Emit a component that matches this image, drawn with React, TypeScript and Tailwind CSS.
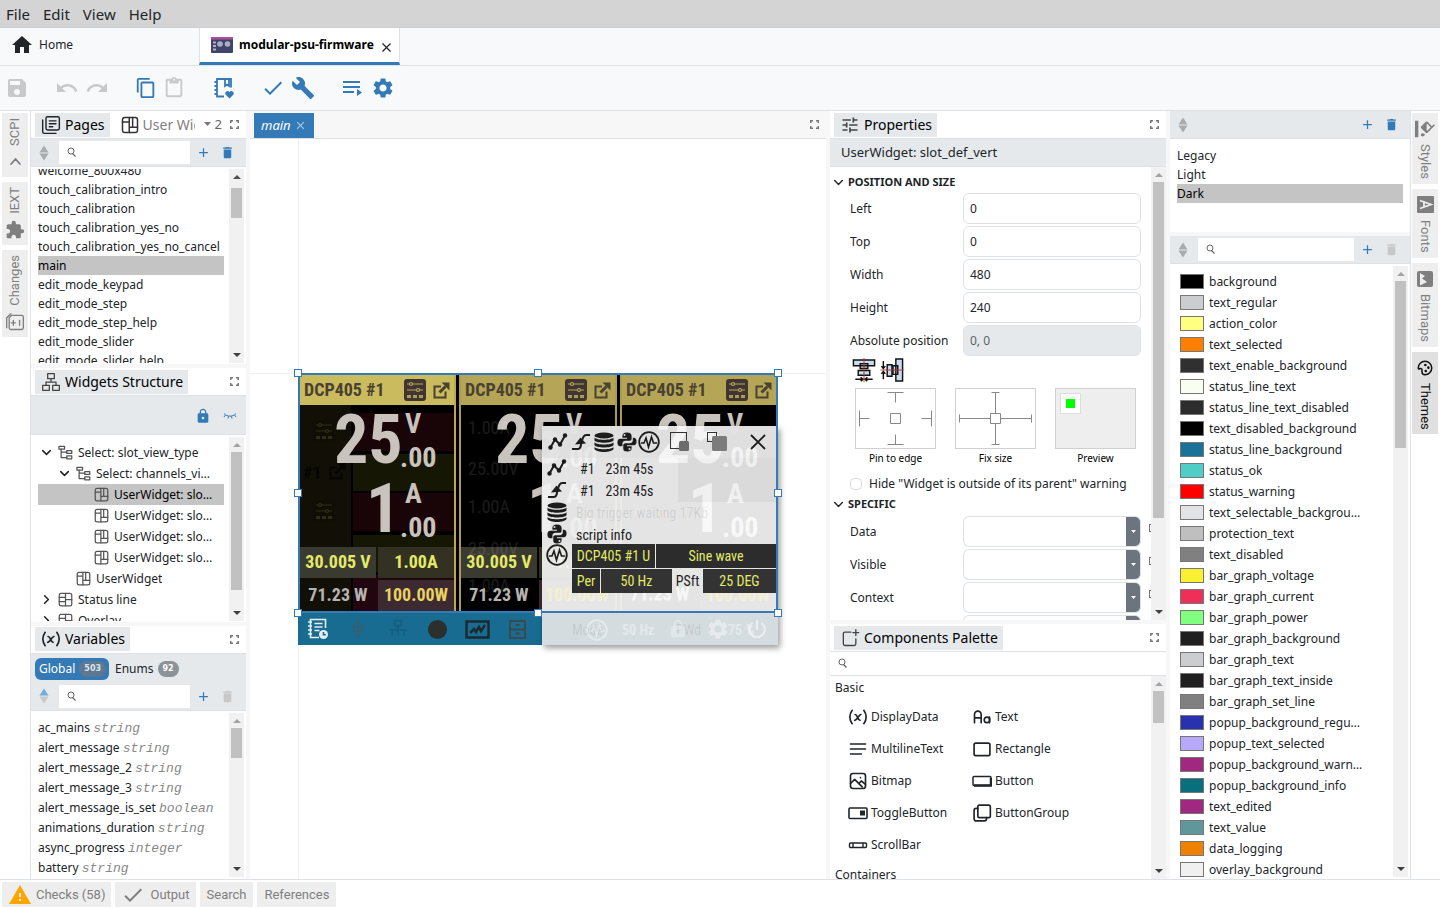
import type { ReactNode } from "react";
import clsx from "clsx";
import {
  MdAdd,
  MdBuild,
  MdCheck,
  MdClose,
  MdContentCopy,
  MdContentPaste,
  MdDelete,
  MdExtension,
  MdFormatColorFill,
  MdHome,
  MdLock,
  MdRedo,
  MdSave,
  MdSettings,
  MdTune,
  MdUndo,
  MdUsb,
  MdWarning,
} from "react-icons/md";

const pages = [
  "welcome_800x480",
  "touch_calibration_intro",
  "touch_calibration",
  "touch_calibration_yes_no",
  "touch_calibration_yes_no_cancel",
  "main",
  "edit_mode_keypad",
  "edit_mode_step",
  "edit_mode_step_help",
  "edit_mode_slider",
  "edit_mode_slider_help",
];

const variables = [
  ["ac_mains", "string"],
  ["alert_message", "string"],
  ["alert_message_2", "string"],
  ["alert_message_3", "string"],
  ["alert_message_is_set", "boolean"],
  ["animations_duration", "string"],
  ["async_progress", "integer"],
  ["battery", "string"],
];

const themeColors = [
  ["background", "#000000"],
  ["text_regular", "#cccdcf"],
  ["action_color", "#ffff80"],
  ["text_selected", "#ff8000"],
  ["text_enable_background", "#303030"],
  ["status_line_text", "#f8fff0"],
  ["status_line_text_disabled", "#2c2c2c"],
  ["text_disabled_background", "#000000"],
  ["status_line_background", "#1a7299"],
  ["status_ok", "#50cdc6"],
  ["status_warning", "#ff0000"],
  ["text_selectable_background", "#e2e3e4"],
  ["protection_text", "#bfbfbf"],
  ["text_disabled", "#808080"],
  ["bar_graph_voltage", "#fdf030"],
  ["bar_graph_current", "#ee3058"],
  ["bar_graph_power", "#80ff80"],
  ["bar_graph_background", "#202020"],
  ["bar_graph_text", "#cccdcf"],
  ["bar_graph_text_inside", "#202020"],
  ["bar_graph_set_line", "#808080"],
  ["popup_background_regular", "#2832b0"],
  ["popup_text_selected", "#b8a8fa"],
  ["popup_background_warning", "#a02880"],
  ["popup_background_info", "#08707c"],
  ["text_edited", "#a02880"],
  ["text_value", "#60979b"],
  ["data_logging", "#f08000"],
  ["overlay_background", "#f0f0f0"],
];

type IconProps = { className?: string; size?: number; children?: ReactNode };

function Line({ className, size = 18, children }: IconProps) {
  return (
    <svg
      width={size}
      height={size}
      viewBox="0 0 24 24"
      fill="none"
      stroke="currentColor"
      strokeWidth="2"
      strokeLinecap="round"
      strokeLinejoin="round"
      className={clsx("shrink-0", className)}
      aria-hidden="true"
    >
      {children}
    </svg>
  );
}

function PagesIcon() {
  return (
    <Line size={20}>
      <rect x="6" y="2" width="16" height="16" rx="2" strokeWidth="1.700" />
      <path d="M2 6v14a2 2 0 0 0 2 2h14M10 7h8M10 10.500h8M10 14h4" strokeWidth="1.700" />
    </Line>
  );
}

function WidgetIcon({ size = 18, className }: IconProps) {
  return (
    <Line size={size} className={className}>
      <rect x="2" y="2" width="20" height="20" rx="3" />
      <path d="M2 8h9M11 2v20M11 15h11M15.500 2v13" />
    </Line>
  );
}

function GridIcon({ size = 15 }: IconProps) {
  return (
    <Line size={size} className="text-[#555]">
      <rect x="2" y="2" width="20" height="20" rx="3" />
      <path d="M2 8.500h10M2 15.500h10M12 2v20M12 12h10" />
    </Line>
  );
}

function SelectIcon() {
  return (
    <Line size={15} className="text-[#555]">
      <rect x="1.500" y="2" width="9" height="4.500" />
      <rect x="14" y="9" width="8" height="4.500" />
      <rect x="14" y="17.500" width="8" height="4.500" />
      <path d="M5 6.500V20h9M5 11.500h9" />
    </Line>
  );
}

function SitemapIcon() {
  return (
    <Line size={20} className="text-[#444]">
      <rect x="8" y="2" width="8" height="6" strokeWidth="1.500" />
      <rect x="2" y="16" width="8" height="6" strokeWidth="1.500" />
      <rect x="14" y="16" width="8" height="6" strokeWidth="1.500" />
      <path d="M12 8v4M6 16v-4h12v4" strokeWidth="1.500" />
    </Line>
  );
}

function VariableIcon({ size = 20 }: IconProps) {
  return (
    <Line size={size}>
      <path d="M5 4C1.500 9 1.500 15 5 20M19 4c3.500 5 3.500 11 0 16M8.500 9c3 0 3 7 6 7M8 16c2 0 5.500-7 7.500-7" />
    </Line>
  );
}

function SearchIcon({ className }: IconProps) {
  return (
    <svg width="10" height="10" viewBox="0 0 10 10" fill="none" stroke="#666" className={className} aria-hidden="true">
      <circle cx="4" cy="4" r="3" />
      <path d="M5.500 6.500L8.500 9.500" strokeWidth="1.300" />
    </svg>
  );
}

function SortIcon({ active }: { active?: boolean }) {
  return (
    <svg width="10" height="16" viewBox="0 0 10 16" className="shrink-0" aria-hidden="true">
      <path d="M.5 7.500L5 .5l4.500 7z" fill={active ? "#71ade0" : "#a9abad"} />
      <path d="M.5 8.500h9L5 15.500z" fill={active ? "#c6c8ca" : "#a9abad"} />
    </svg>
  );
}

function Maximize() {
  return (
    <button type="button" aria-label="Maximize" className="ml-auto mr-[7px] text-[#777]">
      <svg width="9" height="9" viewBox="0 0 9 9" fill="none" stroke="currentColor" strokeWidth="1.500">
        <path d="M.75 3V.75H3M6 .75h2.250V3M8.250 6v2.250H6M3 8.250H.75V6" />
      </svg>
    </button>
  );
}

function Scrollbar({ before, thumb, after, topIdle }: { before: string; thumb: string; after: string; topIdle?: boolean }) {
  return (
    <div className="flex w-[15px] shrink-0 flex-col items-center bg-[#f1f1f1] py-[6px]" aria-hidden="true">
      <svg width="8" height="4" viewBox="0 0 8 4" className="mb-[5px] shrink-0">
        <path d="M0 4l4-4 4 4z" fill={topIdle ? "#a3a3a3" : "#505050"} />
      </svg>
      <div className={before} />
      <div className={clsx("w-[11px] bg-[#c1c1c1]", thumb)} />
      <div className={after} />
      <svg width="8" height="4" viewBox="0 0 8 4" className="mt-[5px] shrink-0">
        <path d="M0 0l4 4 4-4z" fill="#404040" />
      </svg>
    </div>
  );
}

function PanelHeader({ icon, title, children }: { icon: ReactNode; title: string; children?: ReactNode }) {
  return (
    <header className="flex h-7 shrink-0 items-center border-b border-[#dee2e6] bg-white">
      <h2 className="ml-1 flex h-6 items-center gap-1 bg-[#e5e9ec] pl-[6px] pr-[5px] text-sm font-normal text-[#212529]">
        {icon}
        <span className="whitespace-nowrap text-black">{title}</span>
      </h2>
      {children}
      <Maximize />
    </header>
  );
}

function SearchBox({ label }: { label: string }) {
  return (
    <div className="relative min-w-0 flex-1">
      <SearchIcon className="absolute left-[8px] top-[6px]" />
      <input type="text" aria-label={label} className="block h-[23px] w-full bg-white pl-6 outline-none" />
    </div>
  );
}

function ListToolbar({ label, sorted, canDelete }: { label: string; sorted?: boolean; canDelete?: boolean }) {
  return (
    <div className="flex h-7 shrink-0 items-center border-b border-[#dee2e6] bg-[#e5e9ec] pl-2">
      <button type="button" aria-label="Sort" className="mr-[10px]">
        <SortIcon active={sorted} />
      </button>
      <SearchBox label={label} />
      <button type="button" aria-label="Add" className="ml-[6px] text-[#337ab7]">
        <MdAdd size={15} />
      </button>
      <button type="button" aria-label="Delete" className={clsx("ml-[9px] mr-[11px]", canDelete ? "text-[#337ab7]" : "text-[#c8c8c8]")}>
        <MdDelete size={15} />
      </button>
    </div>
  );
}

function RailTab({ label, icon, side, active }: { label: string; icon: ReactNode; side: "left" | "right"; active?: boolean }) {
  return (
    <button
      type="button"
      className={clsx(
        "flex w-[26px] flex-col items-center font-[Roboto,sans-serif] text-[13px] leading-4",
        side === "left" ? "gap-[6px] py-[5px]" : "gap-[6px] pb-[5px] pt-[7px]",
        active ? "bg-[#e0e0e0] text-[#111]" : "bg-[#eeeeee] text-[#7f7f7f]",
      )}
    >
      {side === "left" ? (
        <>
          <span className="rotate-180 [writing-mode:vertical-rl]">{label}</span>
          <span className="flex h-5 items-center">{icon}</span>
        </>
      ) : (
        <>
          <span className="flex h-[18px] items-center">{icon}</span>
          <span className="[writing-mode:vertical-rl]">{label}</span>
        </>
      )}
    </button>
  );
}

function PagesPanel() {
  return (
    <section className="flex min-h-0 flex-1 flex-col bg-white">
      <PanelHeader icon={<PagesIcon />} title="Pages">
        <button type="button" className="ml-[11px] flex w-[74px] items-center gap-1 overflow-hidden whitespace-nowrap text-sm text-[#7f7f7f]">
          <WidgetIcon className="text-[#333]" />
          <span>User Widgets</span>
        </button>
        <button type="button" className="ml-[9px] flex items-center gap-1 text-[13px] text-[#666]">
          <svg width="7" height="4" viewBox="0 0 7 4" aria-hidden="true">
            <path d="M0 0h7l-3.500 4z" fill="#777" />
          </svg>
          2
        </button>
      </PanelHeader>
      <ListToolbar label="Search pages" canDelete />
      <div className="mb-[1px] mt-[2px] flex min-h-0 flex-1 pr-[2px]">
        <ul className="min-w-0 flex-1 overflow-hidden pl-[7px]">
          {pages.map((page) => (
            <li
              key={page}
              className={clsx("mr-[5px] h-[19px] whitespace-nowrap leading-[19px] first:-mt-[8px]", page === "main" && "bg-[#c4c4c4] text-black")}
            >
              {page}
            </li>
          ))}
        </ul>
        <Scrollbar before="h-[4px]" thumb="h-[30px]" after="flex-1" />
      </div>
    </section>
  );
}

type TreeRowProps = { label: string; icon: ReactNode; indent: string; arrow?: "open" | "closed"; selected?: boolean };

function TreeRow({ label, icon, indent, arrow, selected }: TreeRowProps) {
  return (
    <li className={clsx("mr-[5px] flex h-[21px] items-center gap-[5px] pr-[9px] leading-[21px]", indent, selected && "bg-[#c4c4c4] text-black")}>
      <span className="flex w-[14px] shrink-0 justify-center">
        {arrow && (
          <Line size={13} className={clsx("text-[#222]", arrow === "closed" && "-rotate-90")}>
            <path d="M5 8.500l7 7 7-7" strokeWidth="2.800" />
          </Line>
        )}
      </span>
      {icon}
      <span className="truncate">{label}</span>
    </li>
  );
}

function StructurePanel() {
  const widget = <WidgetIcon size={15} className="text-[#555]" />;
  return (
    <section className="flex min-h-0 flex-1 flex-col bg-white">
      <PanelHeader icon={<SitemapIcon />} title="Widgets Structure" />
      <div className="flex h-[39px] shrink-0 items-center justify-end gap-3 border-b border-[#dee2e6] bg-[#e5e9ec] pr-[9px] pt-[2px] text-[#337ab7]">
        <button type="button" aria-label="Lock all">
          <MdLock size={16} />
        </button>
        <button type="button" aria-label="Hide all">
          <svg width="14" height="8" viewBox="0 0 14 8" fill="none" stroke="currentColor">
            <path d="M1 1.500c3 3.500 9 3.500 12 0M2.500 3L1 5M5.500 4.200L5 6.500M8.500 4.200L9 6.500M11.500 3L13 5" />
          </svg>
        </button>
      </div>
      <div className="mb-[1px] mt-[2px] flex min-h-0 flex-1 pr-[2px]">
        <ul className="min-w-0 flex-1 overflow-hidden pl-[7px] pt-[5px]">
          <TreeRow label="Select: slot_view_type" icon={<SelectIcon />} indent="pl-[1px]" arrow="open" />
          <TreeRow label="Select: channels_view_type" icon={<SelectIcon />} indent="pl-[19px]" arrow="open" />
          <TreeRow label="UserWidget: slot_def_vert" icon={widget} indent="pl-[37px]" selected />
          <TreeRow label="UserWidget: slot_def_vert" icon={widget} indent="pl-[37px]" />
          <TreeRow label="UserWidget: slot_def_vert" icon={widget} indent="pl-[37px]" />
          <TreeRow label="UserWidget: slot_def_vert" icon={widget} indent="pl-[37px]" />
          <TreeRow label="UserWidget" icon={widget} indent="pl-[19px]" />
          <TreeRow label="Status line" icon={<GridIcon />} indent="pl-[1px]" arrow="closed" />
          <TreeRow label="Overlay" icon={<GridIcon />} indent="pl-[1px]" arrow="closed" />
        </ul>
        <Scrollbar before="h-0" thumb="h-[138px]" after="flex-1" topIdle />
      </div>
    </section>
  );
}

function VariablesPanel() {
  return (
    <section className="flex min-h-0 flex-1 flex-col bg-white">
      <PanelHeader icon={<VariableIcon />} title="Variables" />
      <div className="flex h-[29px] shrink-0 items-start bg-[#e5e9ec] pl-1 pt-1 leading-[22px]">
        <button type="button" className="flex h-[22px] items-center gap-1 rounded-md bg-[#337ab7] pl-1 pr-[3px] text-white">
          Global
          <span className="flex h-4 items-center rounded-full bg-[#5f7891] px-[5px] font-['DejaVu_Sans'] text-[8px] font-bold text-[#dbe4ec]">503</span>
        </button>
        <button type="button" className="ml-[6px] flex h-[22px] items-center gap-1">
          Enums
          <span className="flex h-4 items-center rounded-full bg-[#8b9298] px-[5px] font-['DejaVu_Sans'] text-[8px] font-bold text-white">92</span>
        </button>
      </div>
      <ListToolbar label="Search variables" sorted />
      <div className="mb-[2px] mt-[2px] flex min-h-0 flex-1 pr-[2px]">
        <ul className="min-w-0 flex-1 overflow-hidden pl-[7px] pt-[5px]">
          {variables.map(([name, type]) => (
            <li key={name} className="h-5 whitespace-nowrap leading-5">
              {name} <em className="font-['Liberation_Mono',monospace] text-[13px] text-[#888]">{type}</em>
            </li>
          ))}
        </ul>
        <Scrollbar before="h-0" thumb="h-[30px]" after="flex-1" topIdle />
      </div>
    </section>
  );
}

function ChannelIcon({ className }: IconProps) {
  return (
    <svg width="22" height="22" viewBox="0 0 22 22" className={clsx("shrink-0", className)} aria-hidden="true">
      <rect width="22" height="22" rx="3" fill="currentColor" />
      <g fill="none" stroke="#b7a95a" strokeWidth="1.200">
        <path d="M3 5h2.500M8.500 5H19M3 11h9.500M15.500 11H19" />
        <circle cx="7" cy="5" r="1.500" />
        <circle cx="14" cy="11" r="1.500" />
      </g>
      <path d="M3 16h4v3H3zM9 16h4v3H9zM15 16h4v3h-4z" fill="#a99b54" />
    </svg>
  );
}

function PopOutIcon({ className }: IconProps) {
  return (
    <svg width="17" height="17" viewBox="0 0 17 17" fill="none" stroke="currentColor" strokeWidth="2" className={clsx("shrink-0", className)} aria-hidden="true">
      <path d="M8 4.500H1.500v11H12.500V9.500" />
      <path d="M6.500 10.500l6-6" strokeWidth="3" />
      <path d="M8.500 .5h8v8z" fill="currentColor" stroke="none" />
    </svg>
  );
}

function Slot({ dim, tinted }: { dim?: boolean; tinted?: boolean }) {
  return (
    <div
      className={clsx(
        "relative h-[238px] w-[158px] shrink-0 whitespace-nowrap border-2 border-t-0 font-['Roboto_Condensed',Roboto,sans-serif]",
        dim ? "border-[#ab9c50]" : "border-[#bda850]",
      )}
    >
      {tinted && (
        <div className="absolute inset-0 bg-[#121006]" aria-hidden="true">
          <div className="absolute inset-y-0 left-[51px] right-0 bg-black" />
          <div className="absolute left-[53px] right-0 top-[38px] h-[38px] bg-[#190408]" />
          <div className="absolute left-[53px] right-0 top-[79px] h-[37px] bg-[#161604]" />
          <div className="absolute left-[53px] right-0 top-[118px] h-[38px] bg-[#190408]" />
          <div className="absolute left-[53px] right-0 top-[160px] h-[37px] bg-[#161604]" />
          <div className="absolute left-[53px] right-0 top-[200px] h-[36px] bg-[#22060f]" />
          <ChannelIcon className="absolute left-[13px] top-[45px] text-[#080804] opacity-20" />
          <ChannelIcon className="absolute left-[13px] top-[125px] text-[#080804] opacity-20" />
          <span className="absolute left-[3px] top-[84px] text-lg font-bold text-[#050503]">#1</span>
          <PopOutIcon className="absolute left-[29px] top-[88px] text-[#050503]" />
        </div>
      )}
      <div className={clsx("relative flex h-[30px] items-center pl-1 text-lg font-bold text-[#494230]", dim ? "bg-[#b5a657]" : "bg-[#cabb5e]")}>
        <span className="mr-auto">DCP405 #1</span>
        <ChannelIcon className="text-[#403530]" />
        <PopOutIcon className="ml-[7px] mr-1 text-[#494230]" />
      </div>
      <span className="absolute left-[34px] top-[27px] text-[68px] font-bold leading-[76px] text-[#c9c3bd]">25</span>
      <span className="absolute left-[105px] top-[33px] text-[28px] font-bold leading-8 text-[#c9c3bd]">V</span>
      <span className="absolute left-[100px] top-[67px] text-[28px] font-bold leading-8 text-[#c9c3bd]">.00</span>
      <span className="absolute left-[66px] top-[96px] text-[68px] font-bold leading-[76px] text-[#c9c3bd]">1</span>
      <span className="absolute left-[105px] top-[103px] text-[28px] font-bold leading-8 text-[#c9c3bd]">A</span>
      <span className="absolute left-[100px] top-[137px] text-[28px] font-bold leading-8 text-[#c9c3bd]">.00</span>
      <div className="absolute inset-x-0 bottom-0 grid grid-cols-2 gap-[2px] text-center text-lg font-bold leading-[30px]">
        <span className="h-[31px] bg-[#3b3a31] text-[#e3ea68]">30.005 V</span>
        <span className="h-[31px] bg-[#333222] text-[#e3ea68]">1.00A</span>
        <span className="h-[31px] text-[#b6b3b0]">71.23 W</span>
        <span className="h-[31px] bg-[#3c2a30] text-[#e8d264]">100.00W</span>
      </div>
    </div>
  );
}

function LogIcon({ className }: IconProps) {
  return (
    <svg width="22" height="22" viewBox="0 0 22 22" fill="none" stroke="currentColor" strokeWidth="1.600" className={className} aria-hidden="true">
      <path d="M18.500 10V1.500h-15v18H12M1 4h4M1 8h4M1 12h4M1 16h4M7.500 5.500h8M7.500 9h8M7.500 12.500h5" />
      <circle cx="16.500" cy="16.500" r="4.500" fill="currentColor" stroke="none" />
      <path d="M16.500 14v2.800h2.300" stroke="#186b91" />
    </svg>
  );
}

function GraphIcon() {
  return (
    <svg width="20" height="20" viewBox="0 0 20 20" fill="none" stroke="#1c1c1c" strokeWidth="2" aria-hidden="true">
      <path d="M2.500 15.500L7 7.500l5 5 5-9" />
      <g fill="#1c1c1c" stroke="none">
        <circle cx="2.500" cy="15.500" r="2.200" />
        <circle cx="7" cy="7.500" r="2.200" />
        <circle cx="12" cy="12.500" r="2.200" />
        <circle cx="17" cy="3.500" r="2.200" />
      </g>
    </svg>
  );
}

function TriggerIcon() {
  return (
    <svg width="20" height="20" viewBox="0 0 20 20" fill="none" stroke="#1c1c1c" strokeWidth="2" aria-hidden="true">
      <path d="M1 17h6c2.500 0 2.500-2 3.500-6.500S12.500 3 15 3h4" />
      <path d="M4 12.500l5.500-7 5.500 6z" fill="#1c1c1c" stroke="none" />
    </svg>
  );
}

function DatabaseIcon() {
  return (
    <svg width="20" height="20" viewBox="0 0 20 20" fill="#1c1c1c" aria-hidden="true">
      <ellipse cx="10" cy="3.500" rx="9.500" ry="3" />
      <path d="M.5 5.500c2 3 17 3 19 0v3c-2 3-17 3-19 0zM.5 10.200c2 3 17 3 19 0v3c-2 3-17 3-19 0zM.5 15c2 3 17 3 19 0v2c-2 4-17 4-19 0z" />
    </svg>
  );
}

function PythonIcon() {
  return (
    <svg width="20" height="20" viewBox="0 0 24 24" fill="#1c1c1c" aria-hidden="true">
      <path d="M12 .5C8 .5 6.500 2 6.500 4.500V7H12v1H4C1.500 8 .5 10 .5 12.500S1.500 17 4 17h2.500v-3c0-2 1.500-3.500 3.500-3.500h5c1.500 0 2.500-1 2.500-2.500V4.500C17.500 2 16 .5 12 .5zM9 2.500a1.200 1.200 0 1 1 0 2.400 1.200 1.200 0 0 1 0-2.400z" />
      <path d="M12 23.500c4 0 5.500-1.500 5.500-4V17H12v-1h8c2.500 0 3.500-2 3.500-4.500S22.500 7 20 7h-1v3c0 2-1.500 3.500-3.500 3.500H10c-1.500 0-2.500 1-2.500 2.500v3.500c0 2.500 1 4 4.500 4zm3-2a1.200 1.200 0 1 1 0-2.400 1.200 1.200 0 0 1 0 2.400z" />
    </svg>
  );
}

function WaveIcon({ className = "text-[#1c1c1c]" }: IconProps) {
  return (
    <svg width="22" height="22" viewBox="0 0 22 22" fill="none" stroke="currentColor" strokeWidth="1.800" className={className} aria-hidden="true">
      <circle cx="11" cy="11" r="9.800" />
      <path d="M3 12h3l2-5 2.500 9L13.500 6l2 6H19" strokeWidth="1.600" />
    </svg>
  );
}

function StatusPopup() {
  return (
    <div className="absolute bottom-0 right-0 h-[219px] w-[236px] overflow-hidden whitespace-nowrap bg-[#f0f0f0]/95 font-['Roboto_Condensed',Roboto,sans-serif] text-sm leading-[22px] text-[#1c1c1c]">
      <div className="absolute inset-x-0 top-0 h-8 bg-[#dcdcdc]/60" aria-hidden="true" />
      <div className="absolute inset-x-0 bottom-0 h-8 bg-[#d5dce0]" aria-hidden="true" />
      <div className="absolute right-0 top-8 h-11 w-[100px] bg-[#dadada]" aria-hidden="true" />
      <div className="absolute inset-0 font-bold text-white/60" aria-hidden="true">
        <span className="absolute left-[114px] -top-[24px] text-[68px] leading-[76px]">25</span>
        <span className="absolute left-[180px] top-[16px] text-[28px] leading-8">.00</span>
        <span className="absolute left-[146px] top-[45px] text-[68px] leading-[76px]">1</span>
        <span className="absolute left-[185px] top-[52px] text-[28px] leading-8">A</span>
        <span className="absolute left-[180px] top-[86px] text-[28px] leading-8">.00</span>
        <span className="absolute left-[19px] top-[16px] text-[28px] leading-8 opacity-30">.00</span>
        <span className="absolute left-[24px] top-[52px] text-[28px] leading-8 opacity-30">A</span>
        <span className="absolute left-[2px] top-[157px] text-lg leading-[22px] text-[#f3edc0]/60">100.00W</span>
        <span className="absolute left-[88px] top-[157px] text-lg leading-[22px]">71.23 W</span>
        <span className="absolute left-[162px] top-[157px] text-lg leading-[22px] text-[#f3edc0]/60">100.00W</span>
      </div>
      <div className="absolute inset-0 text-black/10" aria-hidden="true">
        <span className="absolute left-[34px] top-[76px]">Big trigger waiting 17Kb</span>
        <span className="absolute left-[30px] top-[193px]">Mode</span>
        <span className="absolute left-[80px] top-[193px] font-bold text-white/40">50 Hz</span>
        <span className="absolute left-[134px] top-[193px]">PWd</span>
        <span className="absolute left-[186px] top-[193px] font-bold text-white/40">75 %</span>
        <WaveIcon className="absolute left-[44px] top-[193px] text-white/40" />
        <MdSettings size={24} className="absolute left-[164px] top-[191px] text-white/40" />
        <MdLock size={20} className="absolute left-[126px] top-[193px] text-white/30" />
        <Line size={22} className="absolute left-[204px] top-[192px] text-white/50">
          <path d="M12 3v9M6.500 6a8.500 8.500 0 1 0 11 0" strokeWidth="2.400" />
        </Line>
      </div>
      <div className="relative flex h-8 items-center gap-[3px] pl-[6px]">
        <GraphIcon />
        <TriggerIcon />
        <DatabaseIcon />
        <PythonIcon />
        <WaveIcon className="-ml-[2px] text-[#1c1c1c]" />
        <svg width="20" height="20" viewBox="0 0 20 20" className="ml-[7px]" aria-hidden="true">
          <rect x=".5" y=".5" width="16" height="16" fill="none" stroke="#333" />
          <rect x="9" y="9" width="10" height="10" rx="1.500" fill="#6c6c6c" />
        </svg>
        <svg width="20" height="20" viewBox="0 0 20 20" className="ml-[14px]" aria-hidden="true">
          <rect x=".5" y=".5" width="9" height="9" fill="none" stroke="#333" />
          <rect x="5" y="4" width="15" height="15" rx="1.500" fill="#7c7c7c" />
        </svg>
        <svg width="16" height="16" viewBox="0 0 16 16" className="ml-5" aria-hidden="true">
          <path d="M1 1l14 14M15 1L1 15" stroke="#1c1c1c" strokeWidth="1.800" />
        </svg>
      </div>
      <div className="relative grid h-[86px] grid-cols-[30px_1fr] grid-rows-[22px_22px_22px_20px] pl-[5px]">
        <GraphIcon />
        <span className="flex gap-[11px] pl-[3px]"><span>#1</span><span>23m 45s</span></span>
        <TriggerIcon />
        <span className="flex gap-[11px] pl-[3px]"><span>#1</span><span>23m 45s</span></span>
        <DatabaseIcon />
        <span />
        <PythonIcon />
        <span className="-ml-[1px]">script info</span>
      </div>
      <div className="relative flex pl-1 pr-[2px]">
        <span className="w-[26px]"><WaveIcon /></span>
        <div className="flex flex-1 flex-col gap-[1px] text-center leading-6 text-[#e3ea68]">
          <div className="flex gap-[1px]">
            <span className="w-[83px] bg-[#2c2c2c]">DCP405 #1 U</span>
            <span className="flex-1 bg-[#2c2c2c]">Sine wave</span>
          </div>
          <div className="flex gap-[1px]">
            <span className="w-[28px] bg-[#2c2c2c]">Per</span>
            <span className="w-[71px] bg-[#333]">50 Hz</span>
            <span className="w-[29px] text-[#1c1c1c]">PSft</span>
            <span className="flex-1 bg-[#333]">25 DEG</span>
          </div>
        </div>
      </div>
    </div>
  );
}

const handles = [
  "-left-1 -top-1",
  "left-1/2 -ml-1 -top-1",
  "-right-1 -top-1",
  "-left-1 top-1/2 -mt-1",
  "-right-1 top-1/2 -mt-1",
  "-left-1 -bottom-1",
  "left-1/2 -ml-1 -bottom-1",
  "-right-1 -bottom-1",
];

const slotGhosts = [
  ["1.00A", "top-[41px]"],
  ["25.00V", "top-[82px]"],
  ["1.00A", "top-[120px]"],
  ["25.00V", "top-[162px]"],
  ["1.00A", "top-[199px]"],
];

function Canvas() {
  return (
    <div className="flex flex-1 items-center justify-center overflow-hidden bg-white">
      <div className="relative h-[272px] w-[480px] shrink-0">
        <div className="absolute -top-[400px] left-0 h-[1200px] w-px bg-[#f0f0f0]" />
        <div className="absolute -left-[400px] top-0 h-px w-[1400px] bg-[#f0f0f0]" />
        <div className="relative h-full overflow-hidden bg-[#186b91]">
          <div className="relative flex h-60 gap-[3px] overflow-hidden bg-black pt-[2px]">
            <Slot tinted />
            <Slot dim />
            <Slot dim />
            <div className="absolute left-[170px] top-0 font-['Roboto_Condensed',Roboto,sans-serif] text-lg text-white/10" aria-hidden="true">
              {slotGhosts.map(([text, top]) => (
                <span key={top} className={clsx("absolute left-0", top)}>{text}</span>
              ))}
            </div>
          </div>
          <div className="relative flex h-8 items-center text-[#1f2b30]">
            <LogIcon className="ml-[9px] text-[#e6eeee]" />
            <MdUsb size={20} className="ml-[19px] text-[#35606f]" />
            <Line size={20} className="ml-5 text-[#15607f]">
              <rect x="8" y="2" width="8" height="6" />
              <path d="M12 8v5M2 13h20M5 13v6M12 13v6M19 13v6" />
            </Line>
            <span className="ml-5 size-[19px] rounded-full bg-[#2b302e]" />
            <svg width="25" height="19" viewBox="0 0 25 19" fill="none" stroke="#1c2a30" strokeWidth="2.500" className="ml-[18px]" aria-hidden="true">
              <path d="M1.500 1.500h22v16h-22zM5 13l4-4 2 3 3-5 2 4 4-6" />
            </svg>
            <svg width="17" height="19" viewBox="0 0 17 19" fill="none" stroke="#3b4a4e" strokeWidth="2" className="ml-[19px]" aria-hidden="true">
              <path d="M1 1h15v17H1zM1 9.500h15M6.500 5h4M6.500 13.500h4" />
            </svg>
          </div>
        </div>
        <div className="absolute bottom-0 right-0 h-[219px] w-[236px] shadow-[2px_3px_6px_rgba(0,0,0,0.4)]" />
        <StatusPopup />
        <div className="absolute inset-x-0 top-0 h-60">
          <div className="h-full border-2 border-[#337ab7]" />
          {handles.map((place) => (
            <span key={place} className={clsx("absolute size-2 border border-[#337ab7] bg-white", place)} />
          ))}
        </div>
      </div>
    </div>
  );
}

function CenterPane() {
  return (
    <main className="flex min-w-0 flex-1 flex-col">
      <div className="flex h-7 shrink-0 items-center border-b border-[#dfdfdf] bg-[#f7f7f7]">
        <div className="ml-1 flex h-[25px] items-center gap-[3px] self-end bg-[#337ab7] px-[7px] text-[13px] italic text-white">
          main
          <button type="button" aria-label="Close main" className="text-[#a9cbe8]">
            <MdClose size={13} />
          </button>
        </div>
        <Maximize />
      </div>
      <Canvas />
    </main>
  );
}

function SectionTitle({ children }: { children: ReactNode }) {
  return (
    <h3 className="flex h-[22px] items-center gap-[3px] pl-[2px] text-[11px] font-bold">
      <Line size={13}>
        <path d="M5 8.500l7 7 7-7" strokeWidth="2.600" />
      </Line>
      {children}
    </h3>
  );
}

function Field({ label, value, disabled }: { label: string; value: string; disabled?: boolean }) {
  const id = label.toLowerCase().replace(" ", "-");
  return (
    <div className="mb-[2px] flex items-center pl-5">
      <label htmlFor={id} className="w-[113px] shrink-0 whitespace-nowrap">{label}</label>
      <input
        id={id}
        defaultValue={value}
        disabled={disabled}
        className="h-[31px] w-0 flex-1 rounded-md border border-[#dee2e6] bg-white px-[6px] disabled:bg-[#e5e9ec] disabled:text-[#5b6268]"
      />
      <span className="w-[10px]" />
    </div>
  );
}

function ComboField({ label }: { label: string }) {
  const id = label.toLowerCase();
  return (
    <div className="mb-[2px] flex items-center pl-5">
      <label htmlFor={id} className="w-[113px] shrink-0">{label}</label>
      <input id={id} className="h-[31px] w-0 flex-1 rounded-l-md border border-r-0 border-[#dee2e6] bg-white px-[6px]" />
      <button type="button" aria-label={`${label} options`} className="flex h-[31px] w-[15px] items-center justify-center rounded-r-md border border-l-0 border-[#dee2e6] bg-[#6c757d]">
        <svg width="5" height="3" viewBox="0 0 5 3" aria-hidden="true">
          <path d="M0 0h5L2.500 3z" fill="#fff" />
        </svg>
      </button>
      <span className="flex w-[10px] justify-end">
        <span className="mb-2 h-2 w-[2px] border border-r-0 border-[#777]" />
      </span>
    </div>
  );
}

function PropertiesPanel() {
  return (
    <section className="flex min-h-0 flex-[2] flex-col bg-white">
      <PanelHeader icon={<MdTune size={20} className="text-[#444]" />} title="Properties" />
      <div className="flex h-7 shrink-0 items-center border-b border-[#dee2e6] bg-[#e5e9ec] pl-[11px] text-[13px]">UserWidget: slot_def_vert</div>
      <div className="flex min-h-0 flex-1">
        <div className="min-w-0 flex-1 overflow-hidden pt-1">
          <SectionTitle>POSITION AND SIZE</SectionTitle>
          <Field label="Left" value="0" />
          <Field label="Top" value="0" />
          <Field label="Width" value="480" />
          <Field label="Height" value="240" />
          <Field label="Absolute position" value="0, 0" disabled />
          <div className="ml-[22px] mt-[2px] flex gap-1">
            <button type="button" aria-label="Center horizontally">
              <svg width="24" height="25" viewBox="0 0 24 26" fill="#c9dcef" stroke="#111" strokeWidth="1.500" aria-hidden="true">
                <path d="M1 2h22v6H1zM8 6h8v5H8zM6 13h12v5H6z" />
                <path d="M3 22h8M13 22h8M8.500 20l2.500 2-2.500 2M15.500 20L13 22l2.500 2" fill="none" />
                <path d="M12 0v25" stroke="#b03030" strokeWidth="1" />
              </svg>
            </button>
            <button type="button" aria-label="Center vertically">
              <svg width="24" height="25" viewBox="0 0 24 26" fill="#c9dcef" stroke="#111" strokeWidth="1.500" aria-hidden="true">
                <path d="M7 7h5v12H7zM16 1h7v23h-7zM13 8h5v9h-5z" />
                <path d="M3 3v8M3 14v8M1 8.500l2 2.500 2-2.500M1 16.500L3 14l2 2.500" fill="none" />
                <path d="M0 12.500h24" stroke="#c03030" strokeWidth="1" />
              </svg>
            </button>
          </div>
          <div className="ml-[25px] mt-[5px] flex gap-[19px] text-center text-[10px] leading-[15px] text-black">
            <figure>
              <svg width="81" height="61" viewBox="0 0 81 61" fill="none" stroke="#888" aria-hidden="true">
                <rect x=".5" y=".5" width="80" height="60" stroke="#d0d0d0" />
                <path d="M32.500 4.500h16M40.500 4.500v10M32.500 56.500h16M40.500 56.500v-10M4.500 22.500v16M4.500 30.500h10M76.500 22.500v16M76.500 30.500h-10M35.500 25.500h10v10h-10z" />
              </svg>
              <figcaption className="mt-[2px]">Pin to edge</figcaption>
            </figure>
            <figure>
              <svg width="81" height="61" viewBox="0 0 81 61" fill="none" stroke="#888" aria-hidden="true">
                <rect x=".5" y=".5" width="80" height="60" stroke="#d0d0d0" />
                <path d="M36.500 4.500h8M40.500 4.500v21M36.500 56.500h8M40.500 56.500v-21M4.500 26.500v8M4.500 30.500h31M76.500 26.500v8M76.500 30.500h-31M35.500 25.500h10v10h-10z" />
              </svg>
              <figcaption className="mt-[2px]">Fix size</figcaption>
            </figure>
            <figure>
              <svg width="81" height="61" viewBox="0 0 81 61" aria-hidden="true">
                <rect x=".5" y=".5" width="80" height="60" fill="#eee" stroke="#d0d0d0" />
                <rect x="5.500" y="5.500" width="20" height="20" fill="#fff" stroke="#ddd" />
                <rect x="11" y="11" width="9" height="9" fill="#0f0" />
              </svg>
              <figcaption className="mt-[2px]">Preview</figcaption>
            </figure>
          </div>
          <label className="ml-5 mt-2 flex h-[19px] items-center gap-[7px] whitespace-nowrap">
            <input type="checkbox" className="size-3 appearance-none rounded-sm border border-[#d8dce0] bg-white" />
            Hide "Widget is outside of its parent" warning
          </label>
          <SectionTitle>SPECIFIC</SectionTitle>
          <div className="pt-[1px]">
            <ComboField label="Data" />
            <ComboField label="Visible" />
            <ComboField label="Context" />
            <ComboField label="Style" />
          </div>
        </div>
        <Scrollbar before="h-0" thumb="h-[336px]" after="flex-1" topIdle />
      </div>
    </section>
  );
}

const components: [string, ReactNode][] = [
  ["DisplayData", <VariableIcon />],
  ["Text", <Line size={20}><path d="M3 19V9a4 4 0 0 1 8 0v10M3 13h8M21 12v7" /><circle cx="18" cy="15.500" r="3.300" /></Line>],
  ["MultilineText", <Line size={20}><path d="M3 6h18M3 12h18M3 18h13" /></Line>],
  ["Rectangle", <Line size={20}><rect x="2.500" y="5" width="19" height="15" rx="2" /></Line>],
  ["Bitmap", <Line size={20}><rect x="3" y="3" width="18" height="18" rx="3" /><path d="M3 15l5-5 9 9M14 14l2-2 5 4M15 8h.01" /></Line>],
  ["Button", <svg width="20" height="20" viewBox="0 0 20 20" fill="none" stroke="currentColor" strokeWidth="1.500"><rect x="1" y="5.500" width="18" height="9" rx="1" /><path d="M2 14.500h17V7" strokeWidth="2.500" /></svg>],
  ["ToggleButton", <svg width="20" height="20" viewBox="0 0 20 20" fill="none" stroke="currentColor" strokeWidth="1.600"><rect x="1" y="5" width="18" height="10.500" rx="1" /><path d="M12 7.500h5v5h-5z" fill="currentColor" stroke="none" /></svg>],
  ["ButtonGroup", <Line size={20}><rect x="7" y="2.500" width="15" height="15" rx="2" /><path d="M7 6.500H5a2.500 2.500 0 0 0-2.500 2.500v10A2.500 2.500 0 0 0 5 21.500h10a2.500 2.500 0 0 0 2.500-2.500v-1.500" /></Line>],
  ["ScrollBar", <svg width="20" height="20" viewBox="0 0 20 20" fill="none" stroke="currentColor" strokeWidth="1.400"><rect x="1.500" y="8" width="17" height="4.500" rx="1" /><path d="M5 8v4.500M15 8v4.500" /></svg>],
];

function PalettePanel() {
  return (
    <section className="flex min-h-0 flex-1 flex-col bg-white">
      <PanelHeader
        icon={<Line size={20} className="text-[#444]"><path d="M13 5H6a2 2 0 0 0-2 2v12a2 2 0 0 0 2 2h11a2 2 0 0 0 2-2v-6M19 2v7M15.500 5.500h7" strokeWidth="1.600" /></Line>}
        title="Components Palette"
      />
      <div className="flex h-6 shrink-0 border-b border-[#dee2e6]">
        <SearchBox label="Search components" />
      </div>
      <div className="flex min-h-0 flex-1">
        <div className="min-w-0 flex-1 overflow-hidden pl-[5px] pt-[2px]">
          <h3 className="leading-5">Basic</h3>
          <ul className="ml-[13px] mt-[3px] grid grid-cols-[124px_1fr]">
            {components.map(([name, icon]) => (
              <li key={name} className="flex h-8 items-center gap-[3px] whitespace-nowrap">
                {icon}
                {name}
              </li>
            ))}
          </ul>
          <h3 className="mt-1 leading-5">Containers</h3>
        </div>
        <Scrollbar before="h-0" thumb="h-8" after="flex-1" topIdle />
      </div>
    </section>
  );
}

function ThemesPane() {
  return (
    <aside className="flex w-60 shrink-0 flex-col">
      <section className="flex h-[121px] shrink-0 flex-col bg-white">
        <div className="flex h-7 shrink-0 items-center border-b border-[#dee2e6] bg-[#e5e9ec] pl-2">
          <button type="button" aria-label="Sort themes"><SortIcon /></button>
          <button type="button" aria-label="Add theme" className="ml-auto text-[#337ab7]"><MdAdd size={15} /></button>
          <button type="button" aria-label="Delete theme" className="ml-[9px] mr-[11px] text-[#337ab7]"><MdDelete size={15} /></button>
        </div>
        <ul className="px-[7px] pt-[7px] leading-[19px]">
          <li>Legacy</li>
          <li>Light</li>
          <li className="bg-[#c4c4c4] text-black">Dark</li>
        </ul>
      </section>
      <div className="h-1 shrink-0 bg-[#f7f7f7]" />
      <section className="flex min-h-0 flex-1 flex-col bg-white">
        <ListToolbar label="Search colors" />
        <div className="mb-[2px] mt-[2px] flex min-h-0 flex-1 pr-[2px]">
          <ul className="min-w-0 flex-1 overflow-hidden pl-[10px] pt-[5px]">
            {themeColors.map(([name, color]) => (
              <li key={name} className="flex h-[21px] items-center gap-[5px]">
                <span className="h-[15px] w-6 shrink-0 border border-[#777]" style={{ backgroundColor: color }} />
                <span className="max-w-[154px] truncate">{name}</span>
              </li>
            ))}
          </ul>
          <Scrollbar before="h-0" thumb="h-[167px]" after="flex-1" topIdle />
        </div>
      </section>
    </aside>
  );
}

function TopBars() {
  return (
    <>
      <nav className="flex h-7 shrink-0 items-center gap-[13px] border-b border-[#cfcfcf] bg-[#d4d4d4] pl-[6px] text-[15px]">
        <button type="button">File</button>
        <button type="button">Edit</button>
        <button type="button">View</button>
        <button type="button">Help</button>
      </nav>
      <div className="flex h-[38px] shrink-0 border-b border-[#dee2e6] bg-[#f8f9fa]">
        <button type="button" className="flex w-[199px] items-center gap-[5px] pb-[3px] pl-[10px]">
          <MdHome size={24} />
          Home
        </button>
        <div className="flex w-[201px] items-center border-x border-b-[3px] border-x-[#dee2e6] border-b-[#337ab7] bg-white pl-[11px] pr-2">
          <svg width="22" height="16" viewBox="0 0 22 16" aria-hidden="true">
            <rect width="22" height="16" rx="1" fill="#3f4468" />
            <path d="M0 0h22v2.500H0z" fill="#a8509c" />
            <g fill="#a9b0c4">
              <circle cx="9" cy="7" r="2.800" />
              <circle cx="16.500" cy="7" r="2.800" />
              <path d="M2 4.500h3v2H2zM2 8h3v2H2zM2 11.500h3v2H2z" />
            </g>
          </svg>
          <span className="ml-[6px] mr-auto whitespace-nowrap text-xs font-bold text-black">modular-psu-firmware</span>
          <button type="button" aria-label="Close project" className="mt-[5px]">
            <svg width="9" height="9" viewBox="0 0 9 9" stroke="#222" strokeWidth="1.200"><path d="M.5.5l8 8M8.500.5l-8 8" /></svg>
          </button>
        </div>
      </div>
      <div className="flex h-[45px] shrink-0 items-center border-b border-[#dee2e6] bg-[#f8f9fa] pl-[5px] text-[#337ab7]">
        <button type="button" aria-label="Save" className="text-[#c9c9c9]"><MdSave size={24} /></button>
        <button type="button" aria-label="Undo" className="ml-[26px] text-[#c9c9c9]"><MdUndo size={24} /></button>
        <button type="button" aria-label="Redo" className="ml-[6px] text-[#c9c9c9]"><MdRedo size={24} /></button>
        <button type="button" aria-label="Copy" className="ml-[26px]"><MdContentCopy size={22} /></button>
        <button type="button" aria-label="Paste" className="ml-[6px] text-[#c9c9c9]"><MdContentPaste size={22} /></button>
        <button type="button" aria-label="Scrapbook" className="ml-[28px]">
          <svg width="22" height="22" viewBox="0 0 22 22" fill="none" stroke="currentColor" strokeWidth="1.800">
            <path d="M11 19.500H4V2h14v8.500M12 2v7l2-1.500L16 9V2M1.500 5h3M1.500 9h3M1.500 13h3M1.500 17h3" />
            <path d="M16.500 21.500l-4-4a2.200 2.200 0 0 1 4-2.200 2.200 2.200 0 0 1 4 2.200z" fill="currentColor" stroke="none" />
          </svg>
        </button>
        <button type="button" aria-label="Check" className="ml-[26px]"><MdCheck size={24} /></button>
        <button type="button" aria-label="Build" className="ml-[6px]"><MdBuild size={24} /></button>
        <button type="button" aria-label="Run" className="ml-[27px]">
          <svg width="22" height="18" viewBox="0 0 22 18" fill="none" stroke="currentColor" strokeWidth="2">
            <path d="M1 3h17M1 8h17M1 13h11" />
            <path d="M15 10l5 3.500-5 3.500z" fill="currentColor" stroke="none" />
          </svg>
        </button>
        <button type="button" aria-label="Settings" className="ml-[7px]"><MdSettings size={24} /></button>
      </div>
    </>
  );
}

export default function App() {
  return (
    <div className="flex h-screen flex-col overflow-hidden bg-white font-['Noto_Sans',sans-serif] text-xs text-[#212529]">
      <TopBars />
      <div className="flex min-h-0 flex-1">
        <aside className="flex w-[31px] shrink-0 flex-col gap-[5px] border-r border-[#dee2e6] pl-[2px] pt-[2px]">
          <RailTab side="left" label="SCPI" icon={<Line size={15}><path d="M5 16l7-8 7 8" strokeWidth="3" /></Line>} />
          <RailTab side="left" label="IEXT" icon={<MdExtension size={20} />} />
          <RailTab
            side="left"
            label="Changes"
            icon={<Line size={20}><path d="M8 4h12a2 2 0 0 1 2 2v13a2 2 0 0 1-2 2H7a2 2 0 0 1-2-2V7zM2 19V7l5-5M10 10v6M7.500 13h5M17.500 10v6" strokeWidth="1.600" /></Line>}
          />
        </aside>
        <aside className="flex w-[215px] shrink-0 flex-col">
          <PagesPanel />
          <div className="h-1 shrink-0 bg-[#f7f7f7]" />
          <StructurePanel />
          <div className="h-1 shrink-0 bg-[#f7f7f7]" />
          <VariablesPanel />
        </aside>
        <div className="w-1 shrink-0 bg-[#f7f7f7]" />
        <CenterPane />
        <div className="w-1 shrink-0 bg-[#f7f7f7]" />
        <div className="flex w-[336px] shrink-0 flex-col">
          <PropertiesPanel />
          <div className="h-1 shrink-0 bg-[#f7f7f7]" />
          <PalettePanel />
        </div>
        <div className="w-1 shrink-0 bg-[#f7f7f7]" />
        <ThemesPane />
        <aside className="flex w-[30px] shrink-0 flex-col gap-[5px] border-l border-[#dee2e6] pl-[1px] pt-[2px]">
          <RailTab side="right" label="Styles" icon={<MdFormatColorFill size={20} className="rotate-90" />} />
          <RailTab
            side="right"
            label="Fonts"
            icon={
              <svg width="17" height="17" viewBox="0 0 17 17" className="rotate-90" aria-hidden="true">
                <rect width="17" height="17" rx="1" fill="#7f7f7f" />
                <path d="M4.500 14l4-11 4 11M6 10h5" fill="none" stroke="#eee" strokeWidth="1.800" />
              </svg>
            }
          />
          <RailTab
            side="right"
            label="Bitmaps"
            icon={
              <svg width="16" height="16" viewBox="0 0 16 16" className="rotate-90" aria-hidden="true">
                <rect width="16" height="16" rx="2" fill="#7f7f7f" />
                <path d="M2 13l3-5 2.500 3L11 6l3.500 7z" fill="#eee" />
              </svg>
            }
          />
          <RailTab
            side="right"
            label="Themes"
            active
            icon={
              <Line size={18} className="rotate-90">
                <path d="M12 21a9 9 0 1 1 9-9c0 2.500-2 4-4 4h-2.500a2 2 0 0 0-1 3.700A1.300 1.300 0 0 1 12 21z" />
                <path d="M8 11.500v.01M11.500 7.500v.01M16 11v.01" strokeWidth="3.500" />
              </Line>
            }
          />
        </aside>
      </div>
      <footer className="flex h-[30px] shrink-0 gap-1 border-t border-[#dee2e6] bg-white pb-[2px] pl-[2px] pt-[2px] font-[Roboto,sans-serif] text-[13px] text-[#7f7f7f]">
        <button type="button" className="flex items-center gap-1 bg-[#eeeeee] px-[6px]">
          <MdWarning size={24} className="text-[#ffa500]" />
          Checks (58)
        </button>
        <button type="button" className="flex items-center gap-[5px] bg-[#eeeeee] px-[6px]">
          <MdCheck size={24} />
          Output
        </button>
        <button type="button" className="bg-[#eeeeee] px-[7px]">Search</button>
        <button type="button" className="bg-[#eeeeee] px-[7px]">References</button>
      </footer>
    </div>
  );
}
